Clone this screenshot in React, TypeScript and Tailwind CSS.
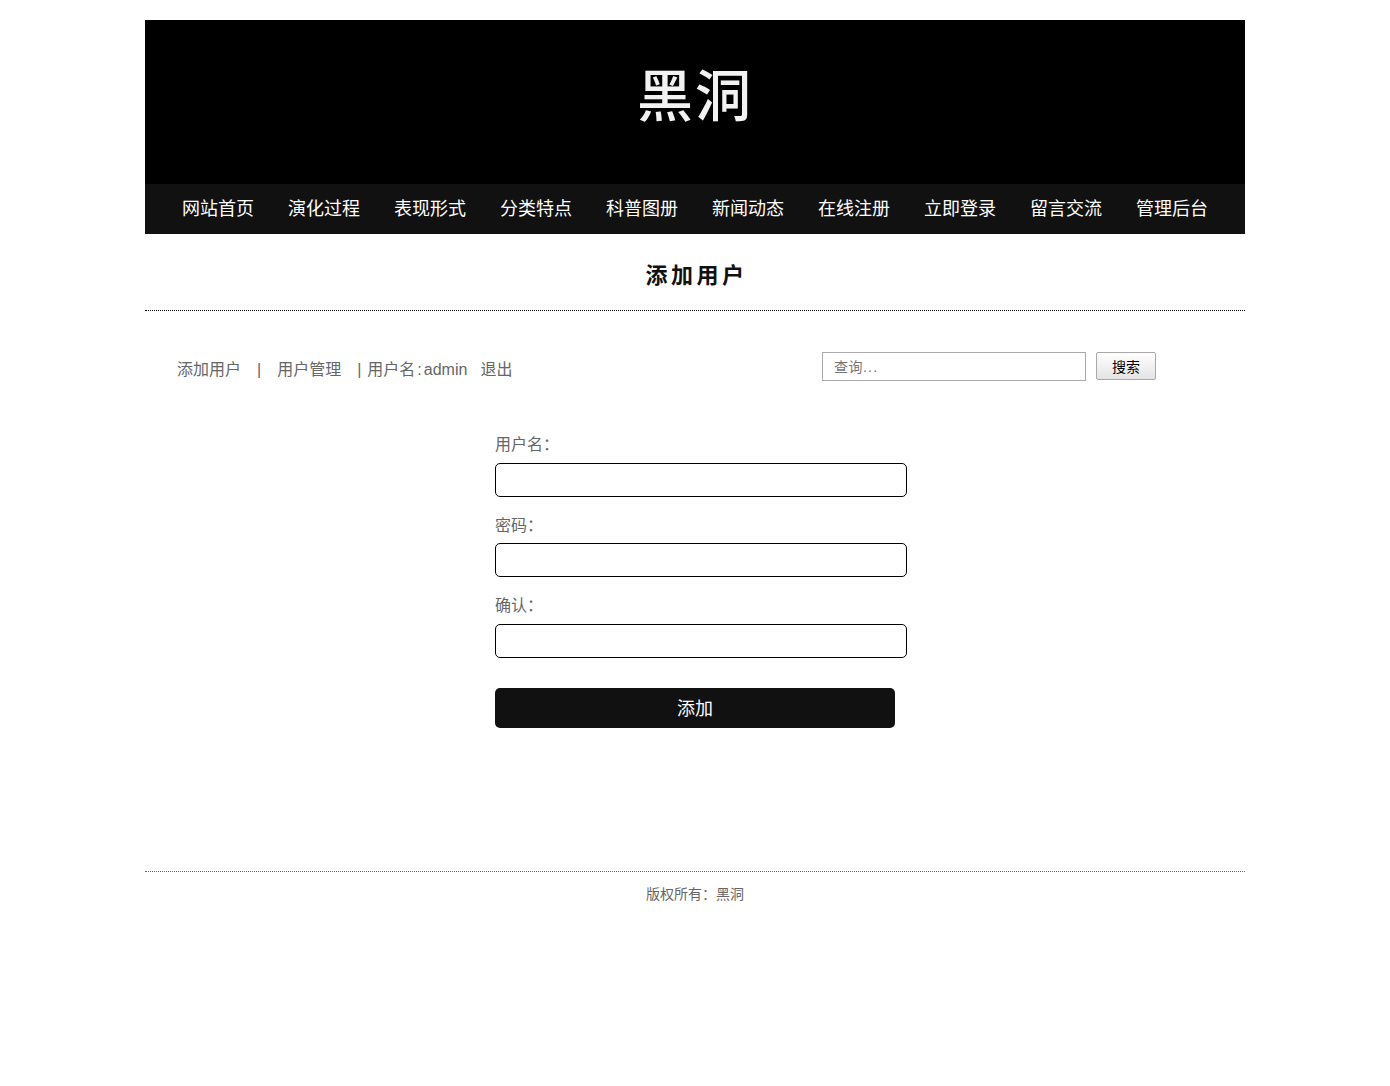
import React from 'react';

const cjk = 'font-["Liberation_Sans","Noto_Sans_CJK_SC",sans-serif]';
const navItems = ['网站首页', '演化过程', '表现形式', '分类特点', '科普图册', '新闻动态', '在线注册', '立即登录', '留言交流', '管理后台'];
const fields = [
  { label: '用户名\uFF1A', mt: 'mt-[6px]', mb: 'mb-[17px]' },
  { label: '密码\uFF1A', mt: 'mt-[5px]', mb: 'mb-[17px]' },
  { label: '确认\uFF1A', mt: 'mt-[6px]', mb: 'mb-[30px]' },
];

export default function App() {
  return (
    <div className={`min-h-[1086px] bg-white pt-5 ${cjk}`}>
      <div className="mx-auto w-[1100px]">
        <header className="flex h-[164px] items-center justify-center bg-black pb-[10px]">
          <h1 className="text-[56px] leading-[64px] font-medium tracking-[2px] text-[#f2f2f2]">黑洞</h1>
        </header>
        <nav className="flex h-[50px] items-center bg-[#111111] px-5">
          {navItems.map((item) => (
            <a key={item} className="w-[106px] text-center text-[18px] leading-[50px] text-white">
              {item}
            </a>
          ))}
        </nav>

        <div className="flex h-[77px] items-center justify-center border-b border-dotted border-black pt-2">
          <h2 className="pl-[3px] text-[22px] leading-[30px] font-bold tracking-[3.5px] text-[#111111]">添加用户</h2>
        </div>

        <div className="flex h-[70px] items-start pt-[41px] pl-8">
          <div className="mt-[6px] flex items-center text-[16px] leading-[24px] text-[#666666]">
            <a>添加用户</a>
            <span className="ml-4">|</span>
            <a className="ml-4">用户管理</a>
            <span className="ml-4">|</span>
            <span className="ml-[6px]">用户名</span>
            <span className="ml-[2px]">:</span>
            <span className="ml-[2px]">admin</span>
            <a className="ml-[13px]">退出</a>
          </div>
          <div className="mr-[89px] ml-auto flex items-start">
            <div className="flex h-[29px] w-[264px] items-center border border-[#a9a9a9] pt-px pl-[11px] text-[14px] tracking-[0.5px] text-[#757575]">
              查询<span className="tracking-[1.2px]">...</span>
            </div>
            <button className="ml-[10px] h-[28px] w-[60px] rounded-[2px] border border-[#a9a9a9] bg-gradient-to-b from-white to-[#e4e4e4] pt-[3px] text-[14px] text-black">搜索</button>
          </div>
        </div>

        <form className="pt-[52px] pl-[350px]">
          {fields.map((f) => (
            <div key={f.label} className={f.mb}>
              <label className="block text-[16px] leading-[24px] text-[#666666]">{f.label}</label>
              <div className={`${f.mt} h-[34px] w-[412px] rounded-[5px] border border-black bg-white`} />
            </div>
          ))}
          <button type="button" className="block h-10 w-[400px] rounded-[5px] bg-[#111111] pt-[2px] text-[18px] text-white">添加</button>
        </form>

        <footer className="mt-[143px] border-t border-dotted border-[#666666] pt-[12px] text-center text-[14px] leading-5 text-[#666666]">
          版权所有{'\uFF1A'}黑洞
        </footer>
      </div>
    </div>
  );
}
